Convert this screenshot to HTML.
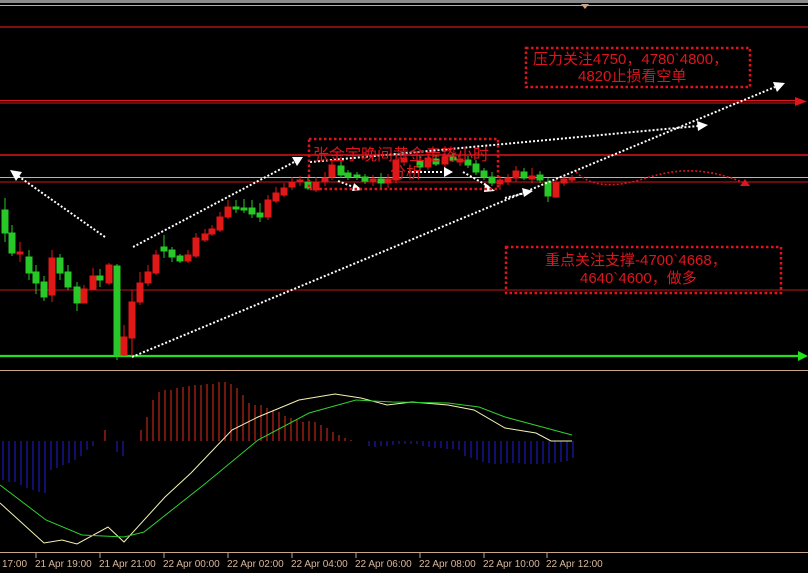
<!DOCTYPE html>
<html><head><meta charset="utf-8"><style>
html,body{margin:0;padding:0;background:#000;width:808px;height:573px;overflow:hidden}
svg{display:block}
.t{font-family:"Liberation Sans","Noto Sans CJK SC",sans-serif;fill:#e0141c;font-size:15px}
.ax{font-family:"Liberation Sans",sans-serif;fill:#d9b89a;font-size:10px}
</style></head><body>
<svg width="808" height="573" viewBox="0 0 808 573" xmlns="http://www.w3.org/2000/svg">
<rect width="808" height="573" fill="#000"/>
<rect x="0" y="0" width="808" height="3" fill="#8a8a8a"/>
<line x1="0" y1="5.5" x2="808" y2="5.5" stroke="#c9a487" stroke-width="1"/>
<polygon points="581,4 589,4 585,9" fill="#c9a487"/>
<!-- horizontal lines -->
<line x1="0" y1="27" x2="808" y2="27" stroke="#d0141c" stroke-width="1.2"/>
<line x1="0" y1="100.5" x2="800" y2="100.5" stroke="#e0141c" stroke-width="1"/>
<line x1="0" y1="103" x2="800" y2="103" stroke="#e0141c" stroke-width="1"/>
<polygon points="795,97 807,101.5 795,106" fill="#e0141c"/>
<line x1="0" y1="155" x2="808" y2="155" stroke="#e0141c" stroke-width="1.6"/>
<line x1="0" y1="177.5" x2="808" y2="177.5" stroke="#d8a890" stroke-width="1"/>
<line x1="0" y1="182" x2="808" y2="182" stroke="#d0141c" stroke-width="1"/>
<line x1="0" y1="290" x2="808" y2="290" stroke="#c0141c" stroke-width="1"/>
<line x1="0" y1="356" x2="800" y2="356" stroke="#22e01c" stroke-width="2.2"/>
<polygon points="798,351 808,356 798,361" fill="#22e01c"/>
<line x1="0" y1="370.5" x2="808" y2="370.5" stroke="#c9a487" stroke-width="1"/>
<line x1="0" y1="552.5" x2="808" y2="552.5" stroke="#c9a487" stroke-width="1"/>
<!-- candles -->
<g stroke-width="1">
<g fill="#28c828" stroke="#28c828">
<line x1="5" y1="198" x2="5" y2="242"/><rect x="2" y="210" width="6" height="23"/>
<line x1="12" y1="225" x2="12" y2="256"/><rect x="9" y="233" width="6" height="20"/>
<line x1="29" y1="250" x2="29" y2="280"/><rect x="26" y="257" width="6" height="16"/>
<line x1="36" y1="265" x2="36" y2="294"/><rect x="33" y="272" width="6" height="11"/>
<line x1="44" y1="276" x2="44" y2="301"/><rect x="41" y="282" width="6" height="15"/>
<line x1="60" y1="254" x2="60" y2="280"/><rect x="57" y="258" width="6" height="15"/>
<line x1="68" y1="265" x2="68" y2="290"/><rect x="65" y="272" width="6" height="15"/>
<line x1="77" y1="282" x2="77" y2="311"/><rect x="74" y="287" width="6" height="16"/>
<line x1="100" y1="269" x2="100" y2="287"/><rect x="97" y="276" width="6" height="4"/>
<line x1="117" y1="264" x2="117" y2="360"/><rect x="114" y="266" width="6" height="89"/>
<line x1="164" y1="235" x2="164" y2="258"/><rect x="161" y="247" width="6" height="4"/>
<line x1="172" y1="247" x2="172" y2="262"/><rect x="169" y="250" width="6" height="7"/>
<line x1="180" y1="254" x2="180" y2="263"/><rect x="177" y="256" width="6" height="5"/>
<line x1="236" y1="200" x2="236" y2="213"/><rect x="233" y="207" width="6" height="2"/>
<line x1="244" y1="199" x2="244" y2="213"/><rect x="241" y="208" width="6" height="2"/>
<line x1="252" y1="200" x2="252" y2="218"/><rect x="249" y="208" width="6" height="6"/>
<line x1="260" y1="203" x2="260" y2="222"/><rect x="257" y="213" width="6" height="4"/>
<line x1="308" y1="177" x2="308" y2="190"/><rect x="305" y="182" width="6" height="6"/>
<line x1="341" y1="160" x2="341" y2="178"/><rect x="338" y="166" width="6" height="9"/>
<line x1="348" y1="170" x2="348" y2="180"/><rect x="345" y="173" width="6" height="4"/>
<line x1="357" y1="172" x2="357" y2="180"/><rect x="354" y="175" width="6" height="2"/>
<line x1="365" y1="174" x2="365" y2="184"/><rect x="362" y="177" width="6" height="4"/>
<line x1="381" y1="173" x2="381" y2="188"/><rect x="378" y="179" width="6" height="4"/>
<line x1="420" y1="155" x2="420" y2="170"/><rect x="417" y="161" width="6" height="6"/>
<line x1="436" y1="155" x2="436" y2="166"/><rect x="433" y="159" width="6" height="5"/>
<line x1="453" y1="153" x2="453" y2="162"/><rect x="450" y="157" width="6" height="3"/>
<line x1="468" y1="156" x2="468" y2="168"/><rect x="465" y="160" width="6" height="5"/>
<line x1="476" y1="160" x2="476" y2="175"/><rect x="473" y="164" width="6" height="8"/>
<line x1="484" y1="168" x2="484" y2="180"/><rect x="481" y="171" width="6" height="6"/>
<line x1="492" y1="172" x2="492" y2="186"/><rect x="489" y="177" width="6" height="6"/>
<line x1="524" y1="168" x2="524" y2="180"/><rect x="521" y="172" width="6" height="6"/>
<line x1="540" y1="171" x2="540" y2="183"/><rect x="537" y="175" width="6" height="5"/>
<line x1="548" y1="178" x2="548" y2="202"/><rect x="545" y="182" width="6" height="14"/>
</g>
<g fill="#e01818" stroke="#e01818">
<line x1="20" y1="242" x2="20" y2="262"/><rect x="17" y="252" width="6" height="2"/>
<line x1="52" y1="250" x2="52" y2="302"/><rect x="49" y="258" width="6" height="37"/>
<line x1="84" y1="285" x2="84" y2="303"/><rect x="81" y="289" width="6" height="14"/>
<line x1="93" y1="268" x2="93" y2="290"/><rect x="90" y="276" width="6" height="13"/>
<line x1="109" y1="263" x2="109" y2="285"/><rect x="106" y="265" width="6" height="18"/>
<line x1="124" y1="325" x2="124" y2="356"/><rect x="121" y="337" width="6" height="18"/>
<line x1="132" y1="290" x2="132" y2="358"/><rect x="129" y="302" width="6" height="36"/>
<line x1="140" y1="272" x2="140" y2="305"/><rect x="137" y="283" width="6" height="19"/>
<line x1="148" y1="265" x2="148" y2="286"/><rect x="145" y="272" width="6" height="11"/>
<line x1="156" y1="250" x2="156" y2="275"/><rect x="153" y="255" width="6" height="18"/>
<line x1="188" y1="250" x2="188" y2="263"/><rect x="185" y="255" width="6" height="6"/>
<line x1="196" y1="233" x2="196" y2="258"/><rect x="193" y="238" width="6" height="18"/>
<line x1="205" y1="229" x2="205" y2="242"/><rect x="202" y="234" width="6" height="6"/>
<line x1="212" y1="225" x2="212" y2="236"/><rect x="209" y="229" width="6" height="5"/>
<line x1="220" y1="212" x2="220" y2="232"/><rect x="217" y="217" width="6" height="13"/>
<line x1="228" y1="200" x2="228" y2="219"/><rect x="225" y="207" width="6" height="10"/>
<line x1="268" y1="195" x2="268" y2="220"/><rect x="265" y="200" width="6" height="17"/>
<line x1="276" y1="187" x2="276" y2="203"/><rect x="273" y="193" width="6" height="8"/>
<line x1="284" y1="183" x2="284" y2="197"/><rect x="281" y="188" width="6" height="7"/>
<line x1="292" y1="177" x2="292" y2="190"/><rect x="289" y="182" width="6" height="5"/>
<line x1="300" y1="176" x2="300" y2="186"/><rect x="297" y="180" width="6" height="2"/>
<line x1="316" y1="177" x2="316" y2="192"/><rect x="313" y="182" width="6" height="8"/>
<line x1="325" y1="172" x2="325" y2="186"/><rect x="322" y="178" width="6" height="4"/>
<line x1="332" y1="160" x2="332" y2="180"/><rect x="329" y="165" width="6" height="12"/>
<line x1="373" y1="175" x2="373" y2="186"/><rect x="370" y="179" width="6" height="2"/>
<line x1="388" y1="174" x2="388" y2="188"/><rect x="385" y="179" width="6" height="4"/>
<line x1="396" y1="155" x2="396" y2="183"/><rect x="393" y="160" width="6" height="20"/>
<line x1="404" y1="152" x2="404" y2="166"/><rect x="401" y="158" width="6" height="4"/>
<line x1="428" y1="154" x2="428" y2="170"/><rect x="425" y="158" width="6" height="9"/>
<line x1="445" y1="152" x2="445" y2="168"/><rect x="442" y="157" width="6" height="7"/>
<line x1="460" y1="155" x2="460" y2="166"/><rect x="457" y="159" width="6" height="3"/>
<line x1="500" y1="176" x2="500" y2="190"/><rect x="497" y="180" width="6" height="4"/>
<line x1="508" y1="174" x2="508" y2="185"/><rect x="505" y="178" width="6" height="4"/>
<line x1="516" y1="166" x2="516" y2="182"/><rect x="513" y="171" width="6" height="7"/>
<line x1="532" y1="168" x2="532" y2="183"/><rect x="529" y="176" width="6" height="3"/>
<line x1="556" y1="180" x2="556" y2="198"/><rect x="553" y="183" width="6" height="14"/>
<line x1="564" y1="175" x2="564" y2="186"/><rect x="561" y="179" width="6" height="4"/>
<line x1="572" y1="175" x2="572" y2="182"/><rect x="569" y="178" width="6" height="2"/>
</g>
</g>
<!-- white dotted arrows -->
<g stroke="#fff" stroke-width="2" stroke-dasharray="2,2" fill="none">
<line x1="105" y1="237" x2="18" y2="176"/>
<line x1="133" y1="247" x2="296" y2="161"/>
<line x1="132" y1="357" x2="775" y2="87"/>
<line x1="310" y1="162" x2="698" y2="126"/>
<line x1="505" y1="198" x2="525" y2="193"/>
<line x1="338" y1="181" x2="356" y2="188"/>
<line x1="408" y1="172" x2="446" y2="172"/>
<line x1="463" y1="172" x2="488" y2="186"/>
</g>
<g fill="#fff">
<polygon points="10,170 22,172 16,181"/>
<polygon points="303,157 292,157 297,166"/>
<polygon points="785,83 773,82 777,92"/>
<polygon points="708,125 697,121 698,131"/>
<polygon points="533,191 522,188 524,197"/>
<polygon points="362,190 354,183 352,191"/>
<polygon points="453,172 444,167 444,177"/>
<polygon points="495,191 485,183 484,192"/>
</g>
<!-- red dotted curve -->
<path d="M576,172 C590,186 610,188 640,180 C670,170 700,165 742,182" stroke="#e0141c" stroke-width="1.6" stroke-dasharray="2,2" fill="none"/>
<polygon points="745,179 740,186 750,186" fill="#e0141c"/>
<!-- boxes -->
<g stroke="#e0141c" stroke-width="2.5" stroke-dasharray="2.5,2.5" fill="none">
<rect x="526" y="48" width="224" height="39"/>
<rect x="506" y="247" width="275" height="46"/>
<rect x="309" y="139" width="189" height="50"/>
</g>
<text class="t" x="533" y="64">压力关注4750，4780`4800，</text>
<text class="t" x="578" y="81">4820止损看空单</text>
<text class="t" x="545" y="265">重点关注支撑-4700`4668，</text>
<text class="t" x="580" y="283">4640`4600，做多</text>
<text class="t" x="313" y="160" style="font-size:16px">张金宇晚间黄金走势小时</text>
<text class="t" x="390" y="178" style="font-size:16px">分析</text>
<!-- MACD histogram -->
<g stroke="#2020d8" stroke-width="1">
<path d="M3,441V480M9,441V482M15,441V482M21,441V485M27,441V488M33,441V490M39,441V492M45,441V493M51,441V470M57,441V468M63,441V465M69,441V463M75,441V460M81,441V456M87,441V450M93,441V446M117,441V452M123,441V456M369,441V446M375,441V447M381,441V446M387,441V446M393,441V445M399,441V444M405,441V444M411,441V444M417,441V444M423,441V446M429,441V447M435,441V448M441,441V448M447,441V449M453,441V449M459,441V450M465,441V456M471,441V458M477,441V460M483,441V462M489,441V463M495,441V464M501,441V464M507,441V463M513,441V463M519,441V463M525,441V464M531,441V464M537,441V464M543,441V464M549,441V463M555,441V463M561,441V462M567,441V461M573,441V458"/>
</g>
<g stroke="#e03020" stroke-width="1">
<path d="M105,441V430M141,441V430M147,441V417M153,441V400M159,441V392M165,441V390M171,441V390M177,441V388M183,441V387M189,441V386M195,441V385M201,441V385M207,441V384M213,441V384M219,441V382M225,441V382M231,441V384M237,441V388M243,441V395M249,441V403M255,441V405M261,441V405M267,441V408M273,441V410M279,441V412M285,441V416M291,441V418M297,441V420M303,441V422M309,441V421M315,441V422M321,441V425M327,441V428M333,441V432M339,441V435M345,441V438M351,441V440"/>
</g>
<polyline fill="none" stroke="#f4f4b0" stroke-width="1" points="0,503 44,543 62,540 77,544 108,527 124,542 165,497 191,473 232,430 258,417 299,400 335,394 361,398 387,405 412,402 448,405 474,410 505,428 536,433 551,441 572,441"/>
<polyline fill="none" stroke="#30d030" stroke-width="1" points="0,485 46,520 82,535 124,537 144,532 206,483 258,440 309,413 356,400 392,402 448,403 479,407 505,417 546,428 572,435"/>
<!-- axis -->
<g stroke="#c9a487" stroke-width="1">
<path d="M36,553V558M100,553V558M164,553V558M228,553V558M292,553V558M356,553V558M420,553V558M484,553V558M547,553V558"/>
</g>
<g class="ax">
<text x="2" y="567">17:00</text>
<text x="35" y="567">21 Apr 19:00</text>
<text x="99" y="567">21 Apr 21:00</text>
<text x="163" y="567">22 Apr 00:00</text>
<text x="227" y="567">22 Apr 02:00</text>
<text x="291" y="567">22 Apr 04:00</text>
<text x="355" y="567">22 Apr 06:00</text>
<text x="419" y="567">22 Apr 08:00</text>
<text x="483" y="567">22 Apr 10:00</text>
<text x="546" y="567">22 Apr 12:00</text>
</g>
</svg>
</body></html>
